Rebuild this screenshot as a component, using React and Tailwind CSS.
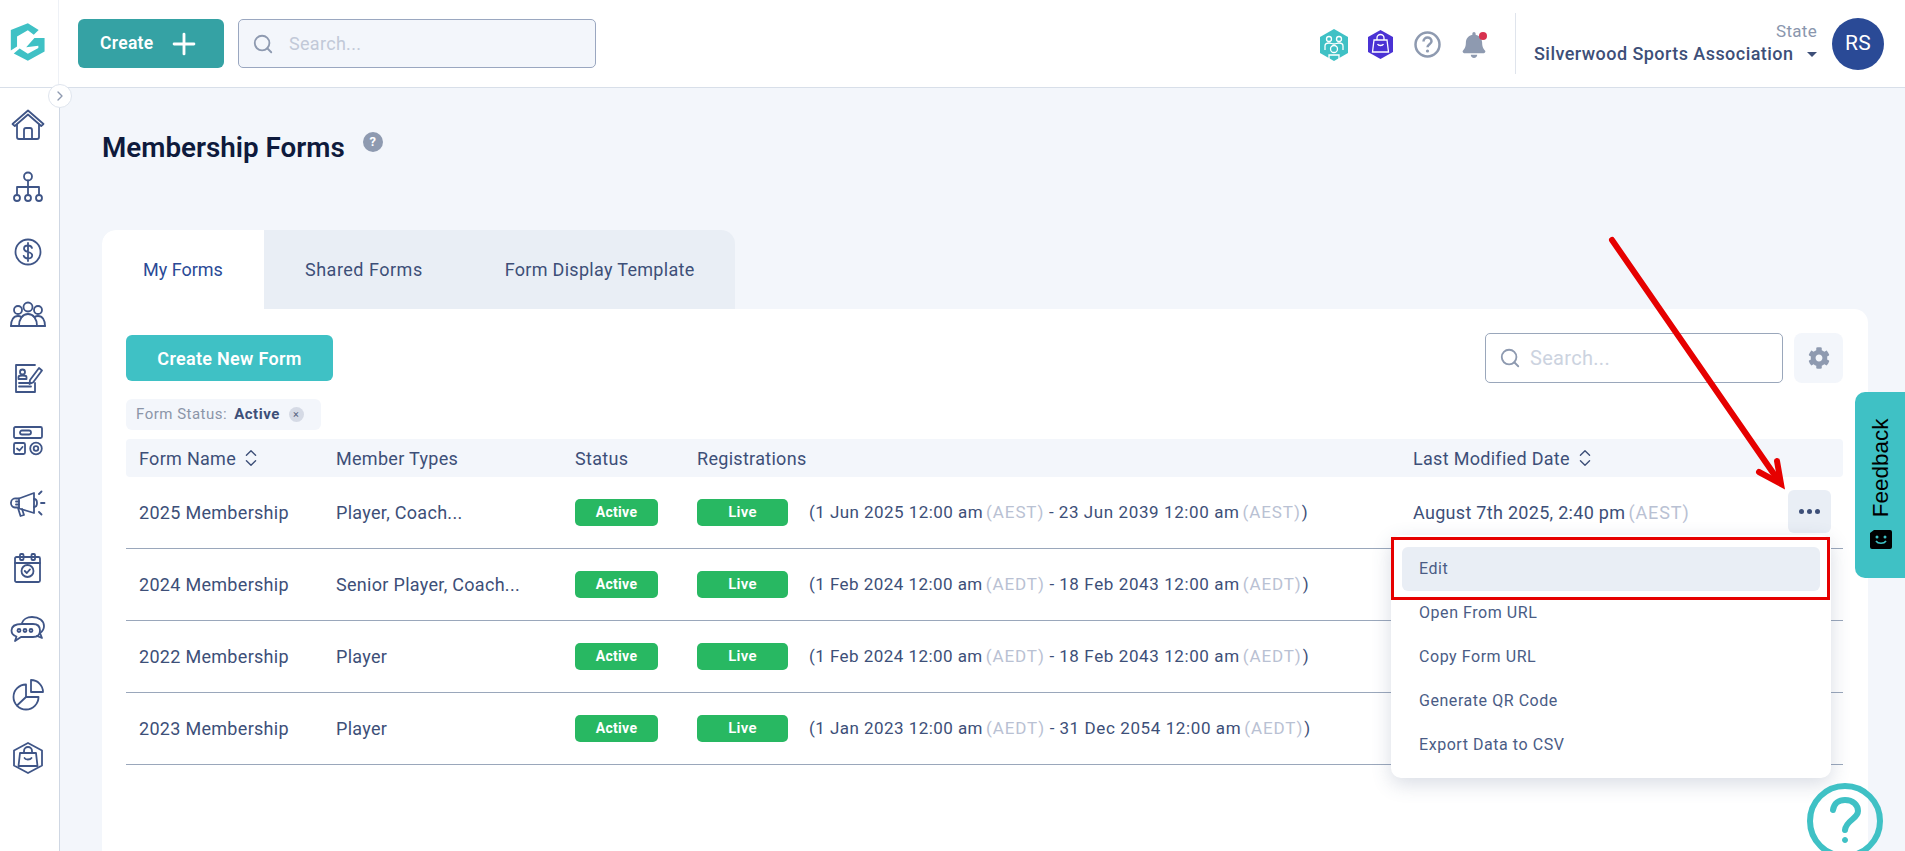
import React from "react";
import { FaCog, FaBell } from "react-icons/fa";
import { ChevronsUpDown, ChevronRight, Search, Plus } from "lucide-react";

const S = ({ children }) => (
  <svg width="36" height="36" viewBox="0 0 36 36" fill="none" stroke="#3f5587" strokeWidth="1.8" strokeLinecap="round" strokeLinejoin="round">{children}</svg>
);

const navIcons = [
  <S key="home"><path d="M2.500 17 18 3.500 33.500 17l-2.300 2L18 7.500 4.800 19z" /><path d="M7 17.500V30a2 2 0 0 0 2 2h18a2 2 0 0 0 2-2V17.500" /><path d="M14 32V23a2 2 0 0 1 2-2h4a2 2 0 0 1 2 2v9" /></S>,
  <S key="org"><circle cx="18" cy="6.500" r="4" /><path d="M18 10.500V17M7 24v-7h22v7M18 17v7" /><circle cx="7" cy="28" r="3" /><circle cx="18" cy="28" r="3" /><circle cx="29" cy="28" r="3" /></S>,
  <S key="dollar"><circle cx="18" cy="18" r="12.500" /><path d="M22 14c-.500-1.500-2-2.500-4-2.500-2.500 0-4 1.300-4 3.200 0 4.300 8.200 2.300 8.200 6.600 0 1.900-1.700 3.200-4.200 3.200-2.200 0-3.800-1-4.300-2.700M18 9v18" /></S>,
  <S key="people"><circle cx="18" cy="10" r="4.500" /><circle cx="8" cy="13" r="4" /><circle cx="28" cy="13" r="4" /><path d="M9 29c0-7 3.500-12 9-12s9 5 9 12" /><path d="M1 29c0-6 2.500-10 7-10 1.500 0 2.500.4 3.500 1.200M35 29c0-6-2.500-10-7-10-1.500 0-2.500.4-3.500 1.200" /><path d="M1 29h34" /></S>,
  <S key="form"><path d="M25 5H6v27h19v-9" /><circle cx="12.500" cy="12" r="2.500" /><path d="M8.500 19v-2c0-1 1-1.500 4-1.500s4 .5 4 1.500v2zM9 23h12M9 26.500h12" /><path d="m20 20 9-12 3 2.500-9 12-3.500 1.500z" /></S>,
  <S key="widgets"><rect x="4" y="4" width="28" height="11" rx="1.500" /><rect x="10" y="7.500" width="11" height="4" rx="2" /><rect x="4" y="20" width="11" height="11" rx="1.500" /><path d="m7 25.500 2.500 2 3-3.500" /><circle cx="26" cy="25.500" r="5.800" /><circle cx="26" cy="25.500" r="2.300" /></S>,
  <S key="mega"><path d="M9 11.500 24 6v20L9 21.500z" /><path d="M9 11.500H6a4.500 4.500 0 0 0-1 9h4M8 21l2.500 8 3.500-1-2-6" /><path d="M6 14.500h3M6 17.500h3M24 12c2 0 3 1.500 3 4s-1 4-3 4" /><path d="m29 7 2.500-2.500M29 25l2.500 2.500M31 16h3.500" /></S>,
  <S key="cal"><rect x="5" y="7" width="25" height="25" rx="1.500" /><rect x="10" y="4" width="3.500" height="6" rx="1" /><rect x="21.500" y="4" width="3.500" height="6" rx="1" /><circle cx="17.500" cy="21" r="6" /><path d="m14.800 21 2 2 3.200-3.600M5 13h25" /></S>,
  <S key="chat"><path d="M12 11h11c5 0 7 2.500 7 6.500S28 24 23 24H11l-6 4 1.500-4.500C3 22.500 1.500 20 1.500 17.500 1.500 13.500 5 11 12 11z" /><path d="M12 10c1-3.500 5-6 10-6 7 0 12 3.500 12 9 0 3-1.500 5.500-4 7l2 5-5-2" /><circle cx="9" cy="17.500" r="1.500" /><circle cx="15" cy="17.500" r="1.500" /><circle cx="21" cy="17.500" r="1.500" /></S>,
  <S key="pie"><path d="M16 7.500a12.500 12.500 0 1 0 12.500 12.500H16z" /><path d="M21 3a12 12 0 0 1 12 12H21zM16 20l-9 8.500" /></S>,
  <S key="bag"><path d="M18 3 32 10.500v15L18 33 4 25.500v-15z" /><path d="M10 13h16l1.500 13h-19z" /><path d="M14 13v-2a4 4 0 0 1 8 0v2M14.500 18c.8 2 5.700 2 7 0" /></S>,
];

const rows = [
  ["2025 Membership", "Player, Coach...", "(1 Jun 2025 12:00 am", "AEST", "23 Jun 2039 12:00 am", "AEST", "August 7th 2025, 2:40 pm"],
  ["2024 Membership", "Senior Player, Coach...", "(1 Feb 2024 12:00 am", "AEDT", "18 Feb 2043 12:00 am", "AEDT", ""],
  ["2022 Membership", "Player", "(1 Feb 2024 12:00 am", "AEDT", "18 Feb 2043 12:00 am", "AEDT", ""],
  ["2023 Membership", "Player", "(1 Jan 2023 12:00 am", "AEDT", "31 Dec 2054 12:00 am", "AEDT", ""],
];

const menu = ["Open From URL", "Copy Form URL", "Generate QR Code", "Export Data to CSV"];

function Zone({ z }) {
  return <span className="ml-[3px] tracking-[0.9px] text-[#b9c1d3]">({z})</span>;
}

export default function App() {
  return (
    <div className="relative h-screen overflow-hidden bg-[#f3f6fb] text-[#3d4f78] font-['Roboto',sans-serif] tracking-[0.3px]">
      <header className="flex h-[88px] items-center border-b border-[#d8dfe9] bg-white pr-[21px]">
        <div className="flex h-[87px] w-[59px] shrink-0 items-center justify-center border-r border-[#eef1f6]">
          <svg width="59" height="60" viewBox="0 0 177 180">
            <path d="M85 27 118 47 103 62 85 48 52 67V98L33 110V47z" fill="#3fc1c5" />
            <path d="M136 72V113L85 141 42 119 60 104 85 120 117 102V95L80 100 105 72z" fill="#3fc1c5" />
          </svg>
        </div>
        <button className="ml-[19px] flex h-[49px] w-[146px] items-center rounded-[6px] bg-[#35a2a4] pl-[22px] text-[17.500px] font-semibold text-white">
          Create
          <Plus className="ml-[13px]" size={34} strokeWidth={2} />
        </button>
        <div className="ml-[14px] flex h-[49px] w-[358px] items-center rounded-[5px] border border-[#9aa7c0] bg-[#f3f6fb] pl-[13px] text-[18px] text-[#c2c9d8]">
          <Search size={22} color="#8e9ab0" strokeWidth={2} className="mr-[15px]" />
          Search...
        </div>
        <div className="ml-auto flex items-center">
          <div className="mt-[2px] flex items-center">
          <svg width="28" height="32" viewBox="0 0 28 32">
            <path d="M14 0 28 8v16l-14 8-14-8V8z" fill="#3fc1c5" />
            <g fill="none" stroke="#fff" strokeWidth="1.300">
              <circle cx="9" cy="10" r="2.500" /><circle cx="19" cy="10" r="2.500" />
              <path d="M5 21v-4c0-2 2-3 4-3s3 1 5 1 3-1 5-1 4 1 4 3v4" />
              <circle cx="14" cy="20" r="3.500" /><path d="M9 30v-4h10v4" />
            </g>
          </svg>
          <svg className="ml-[20px]" width="25" height="29" viewBox="0 0 25 29">
            <path d="M12.500 0 25 7v15l-12.500 7L0 22V7z" fill="#4a32d4" />
            <g fill="none" stroke="#fff" strokeWidth="1.300">
              <path d="M6 10h13l1.500 12h-16z" /><path d="M9 10V8a3.500 3.500 0 0 1 7 0v2M9.500 14c1 2 5 2 6 0" />
            </g>
          </svg>
          <svg className="ml-[21px]" width="27" height="27" viewBox="0 0 27 27" fill="none">
            <circle cx="13.500" cy="13.500" r="12" stroke="#8e9ab0" strokeWidth="2.500" />
            <path d="M9.500 10.500c0-2.500 2-4 4-4s4 1.500 4 3.800c0 3-4 3-4 6" stroke="#8e9ab0" strokeWidth="2.500" />
            <circle cx="13.500" cy="20" r="1.600" fill="#8e9ab0" />
          </svg>
          <div className="relative ml-[22px] h-[30px] w-[23px]">
            <FaBell size={26} color="#8e9ab0" className="-ml-[2px] mt-[2px]" />
            <span className="absolute right-[-1px] top-[2px] h-[8px] w-[8px] rounded-full bg-[#d8324f]" />
          </div>
          </div>
          <div className="ml-[29px] h-[61px] w-px bg-[#dfe4ec]" />
          <div className="ml-[18px] w-[283px] text-right">
            <div className="text-[17px] leading-[20px] text-[#8a96ad]">State</div>
            <div className="mt-[1px] flex items-center justify-between text-[18px] font-medium leading-[24px] tracking-[0.45px] text-[#3d4f78]">
              Silverwood Sports Association
              <span className="h-0 w-0 border-x-[5px] border-t-[5px] border-x-transparent border-t-[#3d4f78]" />
            </div>
          </div>
          <div className="ml-[15px] flex h-[52px] w-[52px] items-center justify-center rounded-full bg-[#2a4a96] text-[21px] text-white">RS</div>
        </div>
      </header>

      <div className="flex h-[763px]">
        <aside className="flex w-[60px] shrink-0 flex-col items-center gap-[27.300px] border-r border-[#cfd7e3] bg-white pr-[3px] pt-[19px]">
          {navIcons}
        </aside>
        <main className="flex-1 pl-[42px] pr-[37px]">
          <div className="flex h-[142px] items-start pt-[43px]">
            <h1 className="text-[27.800px] font-semibold leading-[34px] tracking-normal text-[#0e1a3c]">Membership Forms</h1>
            <span className="ml-[18px] mt-[1px] flex h-[20px] w-[20px] items-center justify-center rounded-full bg-[#8e9ab0] text-[13px] font-bold text-white">?</span>
          </div>

          <div className="flex h-[79px] w-[633px] rounded-t-[14px] bg-[#e9eef5] text-[18px]">
            <div className="flex w-[162px] items-center rounded-tl-[14px] bg-white pl-[41px] tracking-normal text-[#2a4a96]">My Forms</div>
            <div className="ml-[41px] flex items-center tracking-[0.5px]">Shared Forms</div>
            <div className="ml-[82px] flex items-center">Form Display Template</div>
          </div>

          <section className="h-[600px] rounded-tr-[14px] bg-white pl-[24px] pr-[25px] pt-[24px]">
            <div className="flex h-[50px] items-center">
              <button className="h-[46px] w-[207px] rounded-[6px] bg-[#3fc1c5] text-[18px] font-semibold text-white">Create New Form</button>
              <div className="ml-auto flex h-[50px] w-[298px] items-center rounded-[5px] border border-[#9aa7bb] bg-white pl-[13px] text-[20px] text-[#ccd3e0]">
                <Search size={22} color="#8e9ab0" strokeWidth={2} className="mr-[9px]" />
                Search...
              </div>
              <div className="ml-[11px] flex h-[50px] w-[49px] items-center justify-center rounded-[8px] bg-[#f3f6fb]">
                <FaCog size={22} color="#8e9ab0" />
              </div>
            </div>

            <div className="mt-[16px] flex h-[31px] w-[195px] items-center rounded-[6px] bg-[#f3f6fb] pl-[10px] text-[15px] tracking-[0.5px] text-[#8b95a8]">
              Form Status:
              <span className="ml-[7px] font-bold text-[#3d4f78]">Active</span>
              <span className="ml-[9px] flex h-[15px] w-[15px] items-center justify-center rounded-full bg-[#d5dae5] text-[11px] leading-none text-[#56637f]">×</span>
            </div>

            <div className="mt-[9px] grid h-[38px] grid-cols-[210px_239px_122px_716px_1fr] items-center rounded-[4px] bg-[#f3f6fb] text-[18px]">
              <div className="flex items-center pl-[13px]">Form Name<ChevronsUpDown size={22} strokeWidth={1.500} className="ml-[4px]" /></div>
              <div>Member Types</div>
              <div>Status</div>
              <div>Registrations</div>
              <div className="flex items-center">Last Modified Date<ChevronsUpDown size={22} strokeWidth={1.500} className="ml-[4px]" /></div>
            </div>

            {rows.map((r, i) => (
              <div key={r[0]} className="relative grid h-[72px] grid-cols-[210px_239px_122px_716px_1fr] items-center border-b border-[#9aa7bb] text-[18px]">
                <div className="pl-[13px]">{r[0]}</div>
                <div>{r[1]}</div>
                <div><span className="flex h-[27px] w-[83px] items-center justify-center rounded-[5px] bg-[#28b862] text-[14px] font-bold text-white">Active</span></div>
                <div className="flex items-center">
                  <span className="flex h-[27px] w-[91px] items-center justify-center rounded-[5px] bg-[#28b862] text-[15px] font-semibold text-white">Live</span>
                  <span className="ml-[21px] whitespace-nowrap text-[17px] tracking-[0.45px]">
                    {r[2]}<Zone z={r[3]} /> - <span className="tracking-[0.6px]">{r[4]}</span><Zone z={r[5]} /><span className="ml-[1px]">)</span>
                  </span>
                </div>
                <div className="whitespace-nowrap">{r[6]}{r[6] && <Zone z={r[3]} />}</div>
                {i === 0 && (
                  <>
                    <div className="absolute right-[12px] top-[13px] flex h-[43px] w-[43px] items-center justify-center gap-[3px] rounded-[6px] bg-[#e9eef5]">
                      <i className="h-[5px] w-[5px] rounded-full bg-[#3d4f78]" />
                      <i className="h-[5px] w-[5px] rounded-full bg-[#3d4f78]" />
                      <i className="h-[5px] w-[5px] rounded-full bg-[#3d4f78]" />
                    </div>
                    <div className="absolute right-[12px] top-[58px] z-10 h-[243px] w-[440px] rounded-[10px] bg-white px-[11px] pt-[12px] text-[16px] tracking-[0.55px] text-[#4a5c85] shadow-[0_6px_20px_rgba(60,80,120,0.2)]">
                      <div className="flex h-[44px] items-center rounded-[6px] bg-[#e9eef5] pl-[17px]">Edit</div>
                      {menu.map((m) => (
                        <div key={m} className="flex h-[44px] items-center pl-[17px]">{m}</div>
                      ))}
                      <div className="absolute left-0 top-[2px] h-[63px] w-[439px] border-[3px] border-[#e60000]" />
                    </div>
                  </>
                )}
              </div>
            ))}
          </section>
        </main>
      </div>

      <button className="absolute left-[48px] top-[84px] flex h-[24px] w-[24px] items-center justify-center rounded-full border border-[#dfe5ee] bg-white">
        <ChevronRight size={16} color="#8e9ab0" />
      </button>

      <svg className="absolute left-[1600px] top-[230px] z-20" width="190" height="265" viewBox="0 0 190 265" fill="none" stroke="#e60000" strokeLinecap="round">
        <path d="M12 10 178 250" strokeWidth="6" />
        <path d="M177 231 181 254 159 242" strokeWidth="6" />
      </svg>

      <div className="absolute right-0 top-[392px] z-20 flex h-[186px] w-[50px] flex-col items-center rounded-l-[10px] bg-[#3fc1c5] pl-[1px] text-black">
        <div className="flex h-[138px] items-center pt-[13px]">
          <span className="-rotate-90 font-['Liberation_Sans',sans-serif] text-[22.500px] tracking-normal">Feedback</span>
        </div>
        <svg width="22" height="19" viewBox="0 0 22 19">
          <path d="M0 3 4 0h16a2 2 0 0 1 2 2v15a2 2 0 0 1-2 2H2a2 2 0 0 1-2-2z" fill="#000" />
          <circle cx="7" cy="7" r="1.500" fill="#3fc1c5" /><circle cx="15" cy="7" r="1.500" fill="#3fc1c5" />
          <path d="M6 11c2 3 8 3 10 0" stroke="#3fc1c5" strokeWidth="1.600" fill="none" />
        </svg>
      </div>

      <svg className="absolute left-[1807px] top-[783px] z-20" width="76" height="76" viewBox="0 0 76 76" fill="none" stroke="#3fc1c5">
        <circle cx="38" cy="38" r="35" strokeWidth="6" />
        <path d="M26 27c1-7 6-10 12-10 8 0 13 5 13 11 0 8-12 9-13 19" strokeWidth="6" strokeLinecap="round" />
        <circle cx="38" cy="57" r="2.500" fill="#3fc1c5" strokeWidth="1" />
      </svg>
    </div>
  );
}
